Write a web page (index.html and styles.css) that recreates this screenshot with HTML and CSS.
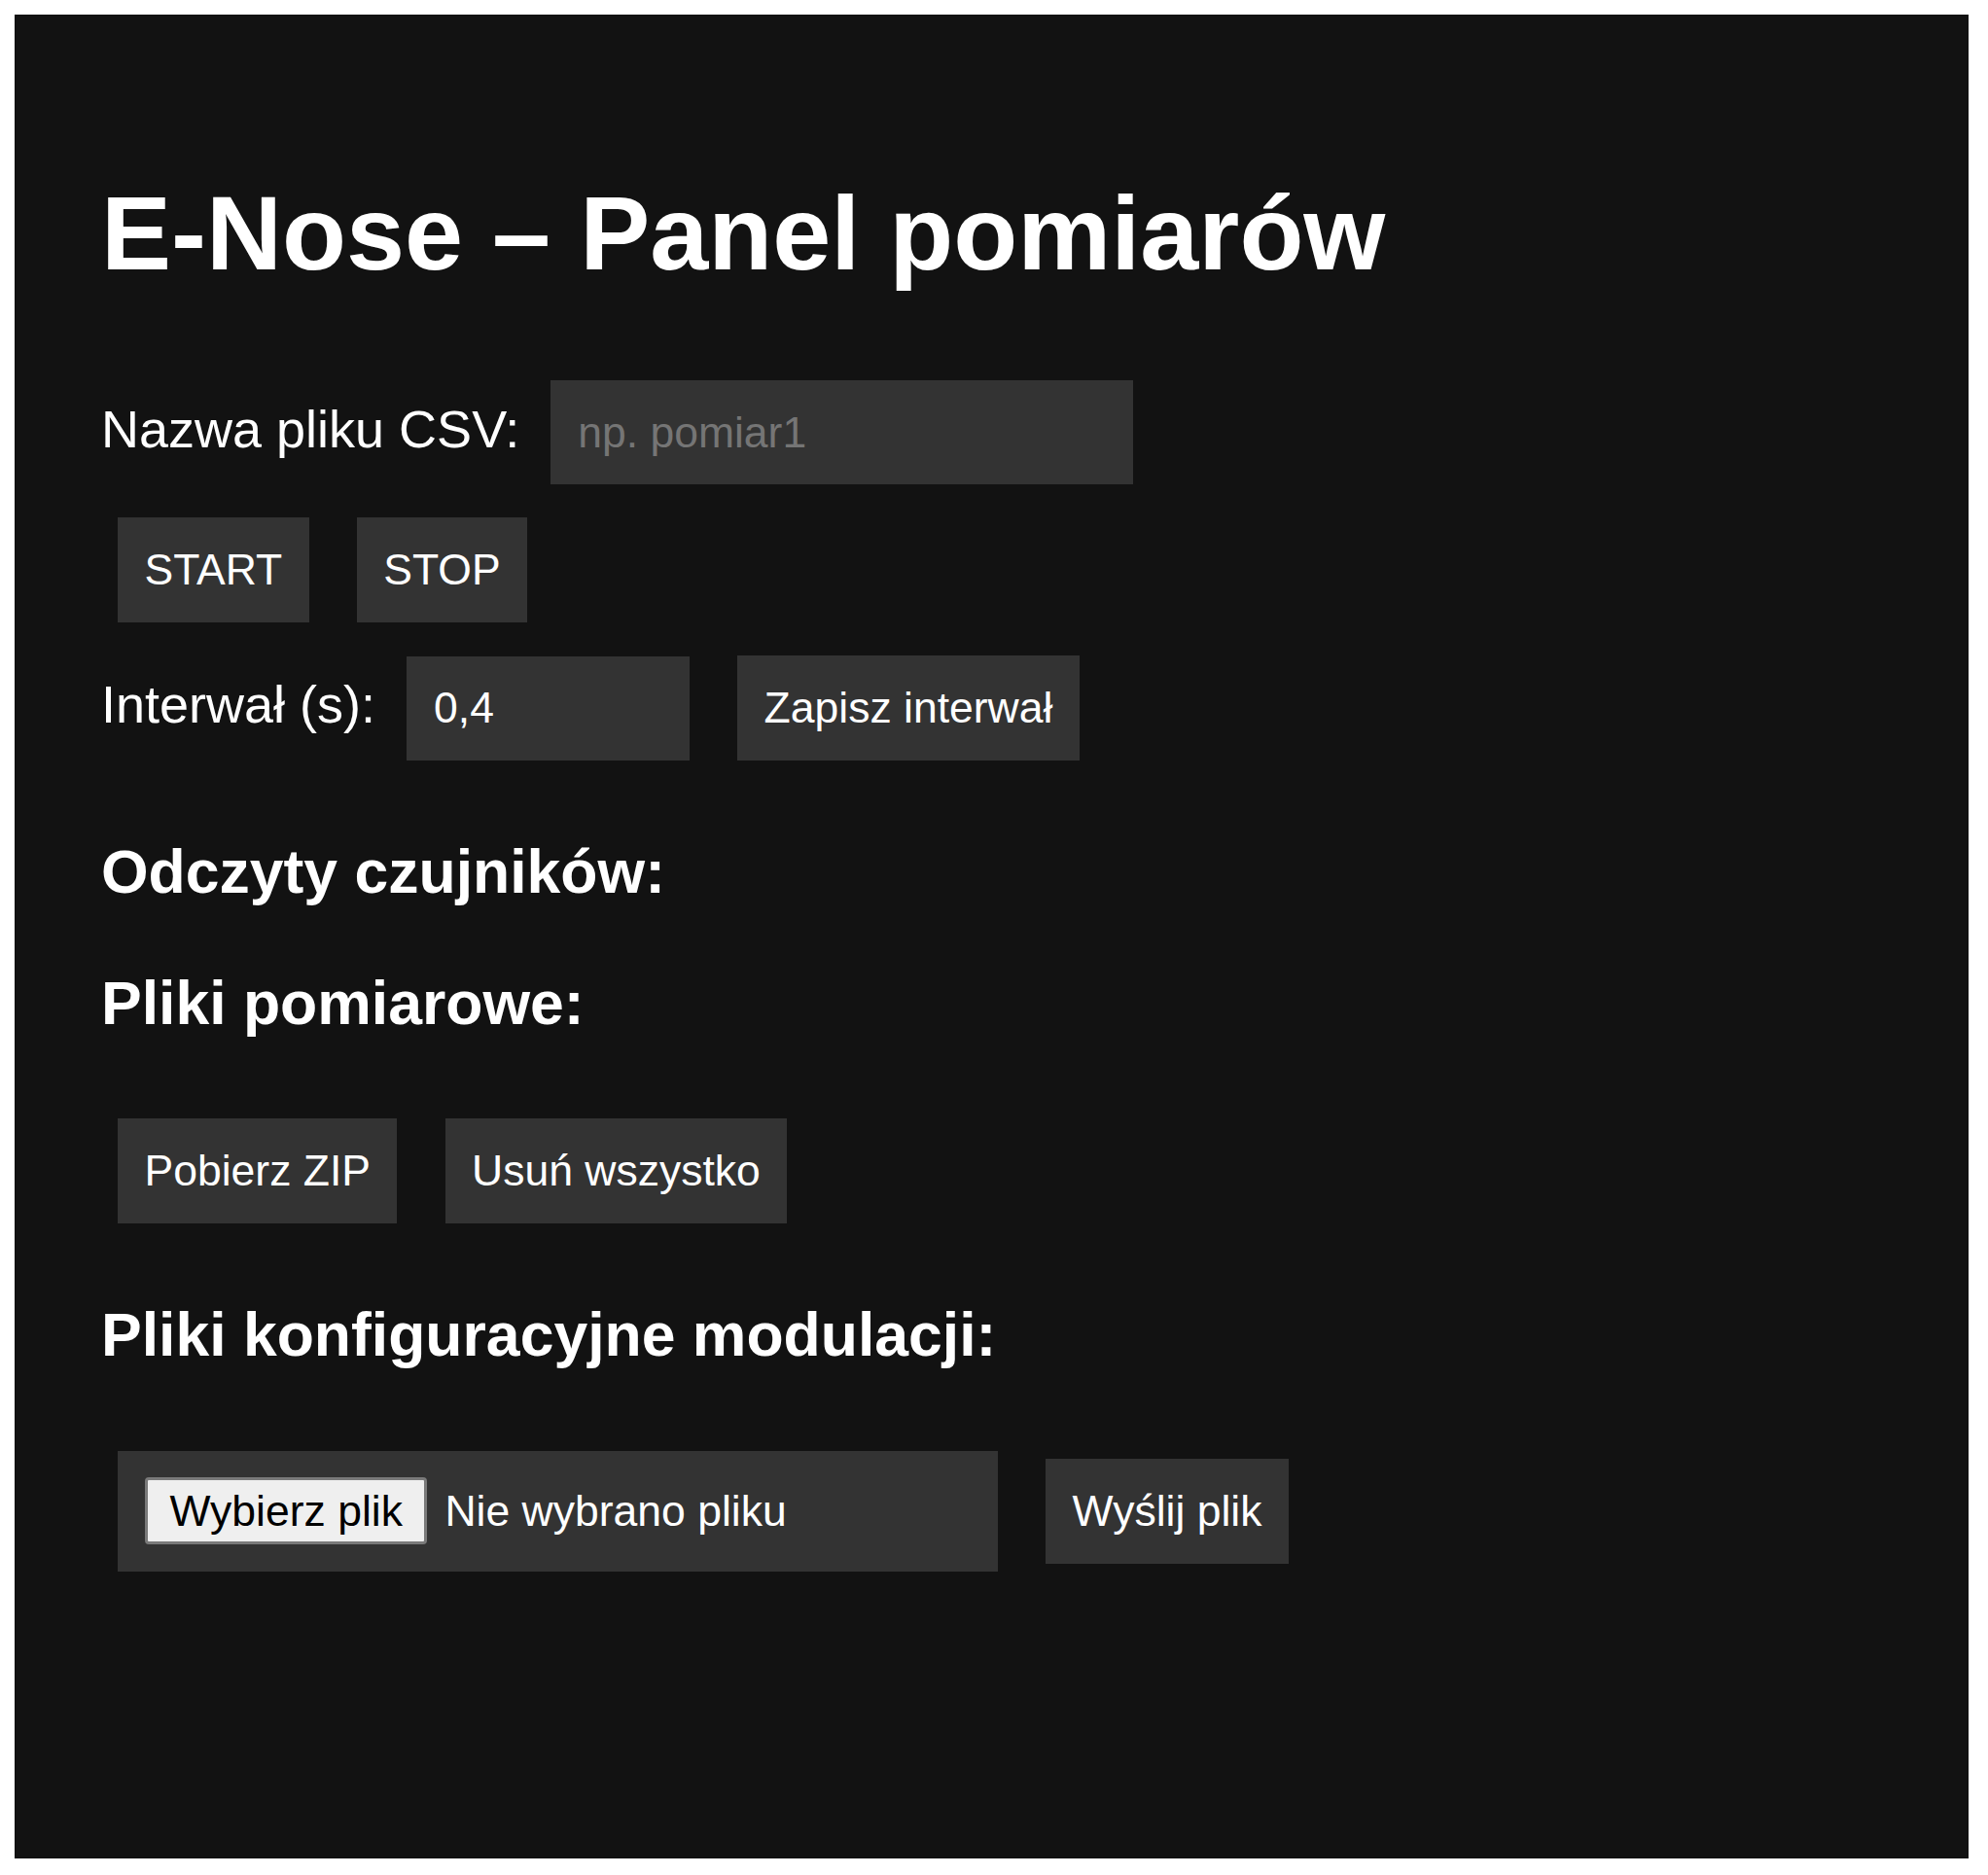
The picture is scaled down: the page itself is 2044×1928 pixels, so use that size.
FILE: index.html
```html
<!DOCTYPE html>
<html lang="pl">
<head>
<meta charset="utf-8">
<title>E-Nose – Panel pomiarów</title>
<link rel="stylesheet" href="styles.css">
</head>
<body>
<div class="page">
  <h1 class="title">E-Nose – Panel pomiarów</h1>
  <div class="row">Nazwa pliku CSV: <input class="field field-wide" type="text" placeholder="np. pomiar1"></div>
  <div class="row"><button class="btn">START</button> <button class="btn">STOP</button></div>
  <div class="row">Interwał (s): <input class="field field-narrow" type="text" value="0,4"> <button class="btn">Zapisz interwał</button></div>
  <h3 class="section">Odczyty czujników:</h3>
  <div class="readings"></div>
  <h3 class="section">Pliki pomiarowe:</h3>
  <div class="row row-files"><button class="btn">Pobierz ZIP</button> <button class="btn">Usuń wszystko</button></div>
  <h3 class="section">Pliki konfiguracyjne modulacji:</h3>
  <div class="row row-upload"><span class="file-input"><span class="file-btn">Wybierz plik</span><span class="file-text">Nie wybrano pliku</span></span> <button class="btn">Wyślij plik</button></div>
</div>
</body>
</html>
```

FILE: styles.css
```css
html {
  background: #ffffff;
}
body {
  margin: 0;
}
.page {
  margin: 15px 20px 0 15px;
  height: 1896px;
  box-sizing: border-box;
  padding: 92px 89px 0 89px;
  background: #121212;
  color: #ffffff;
  font-family: "Liberation Sans", Arial, sans-serif;
  font-size: 54px;
}
.title {
  font-size: 108px;
  font-weight: bold;
  margin: 70px 0 72px 0;
  line-height: normal;
}
.row {
  margin: 0;
}
.field {
  display: inline-block;
  box-sizing: border-box;
  height: 107px;
  margin: 17px;
  padding: 0 28px;
  border: none;
  outline: none;
  background: #333333;
  color: #ffffff;
  font-family: "Liberation Sans", Arial, sans-serif;
  font-size: 44.5px;
  vertical-align: baseline;
}
.field::placeholder {
  color: #757575;
}
.field-wide {
  width: 599px;
}
.field-narrow {
  width: 291px;
}
.btn {
  display: inline-block;
  box-sizing: border-box;
  height: 108px;
  margin: 17px;
  padding: 0 27.5px;
  border: none;
  background: #333333;
  color: #ffffff;
  font-family: "Liberation Sans", Arial, sans-serif;
  font-size: 44.5px;
  vertical-align: baseline;
}
.section {
  font-size: 62.5px;
  font-weight: bold;
  margin: 61px 0 62.5px 0;
}
.readings {
  margin: 0;
}
.row-files {
  padding-top: 4px;
  margin-bottom: 0;
}
.row-upload {
  padding-top: 4px;
}
.file-input {
  display: inline-flex;
  align-items: center;
  box-sizing: border-box;
  width: 905px;
  height: 124px;
  margin: 17px;
  padding: 0 28px;
  background: #333333;
  vertical-align: baseline;
  font-size: 44.5px;
}
.file-btn {
  display: inline-block;
  box-sizing: border-box;
  height: 69px;
  line-height: 63px;
  padding: 0 22.5px;
  margin-right: 18px;
  border: 3px solid #7a7a7a;
  border-radius: 4px;
  background: #efefef;
  color: #000000;
}
.file-text {
  color: #ffffff;
}
```
